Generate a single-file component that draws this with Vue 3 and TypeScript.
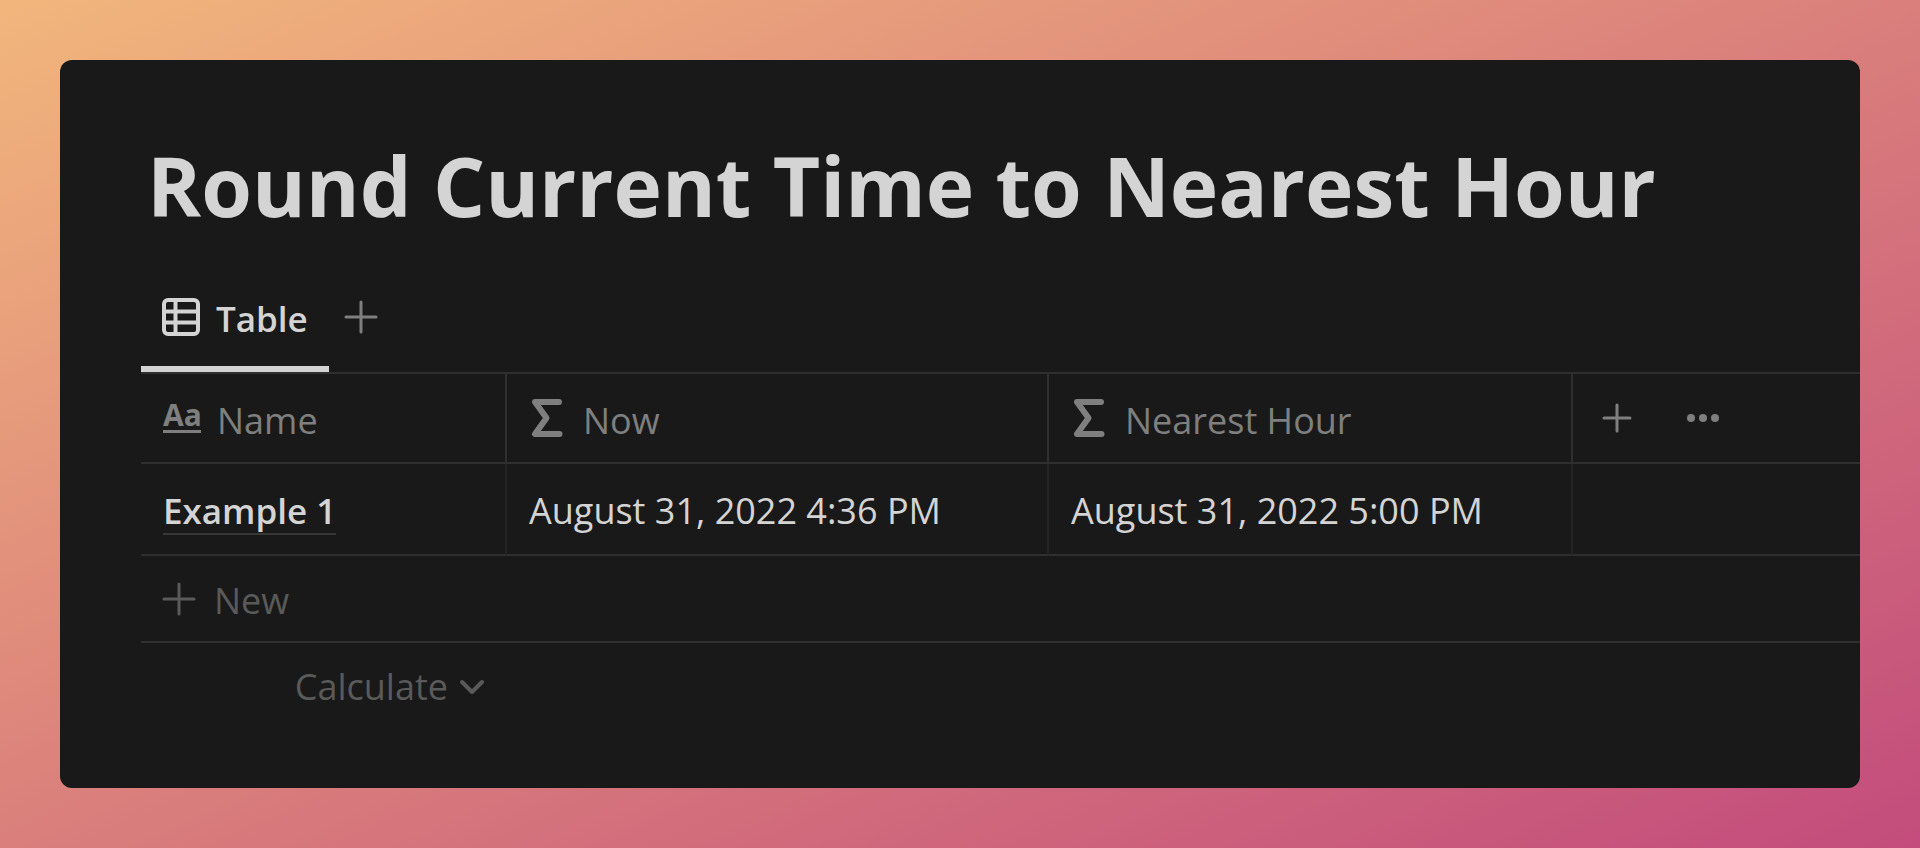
<script setup lang="ts">
interface Column {
  key: 'name' | 'now' | 'nearest'
  label: string
  kind: 'title' | 'formula'
}

interface Row {
  name: string
  now: string
  nearest: string
}

const columns: Column[] = [
  { key: 'name', label: 'Name', kind: 'title' },
  { key: 'now', label: 'Now', kind: 'formula' },
  { key: 'nearest', label: 'Nearest Hour', kind: 'formula' },
]

const rows: Row[] = [
  { name: 'Example 1', now: 'August 31, 2022 4:36 PM', nearest: 'August 31, 2022 5:00 PM' },
]
</script>

<template>
  <div class="page">
    <main class="card">
      <h1 class="title">Round Current Time to Nearest Hour</h1>

      <nav class="tabs" aria-label="Views">
        <button type="button" class="tab">
          <svg class="icon" width="38" height="38" viewBox="0 0 38 38" aria-hidden="true">
            <rect x="2" y="2" width="34" height="34" rx="4" />
            <path d="M13.500 2V36M2 13.500H36M2 24.500H36" />
          </svg>
          <span class="label">Table</span>
        </button>
        <button type="button" class="icon-button" aria-label="Add view">
          <svg class="icon thin" width="34" height="34" viewBox="0 0 34 34" aria-hidden="true">
            <path d="M17 2V32M2 17H32" />
          </svg>
        </button>
      </nav>

      <table class="grid">
        <colgroup>
          <col class="col-name" />
          <col class="col-now" />
          <col class="col-nearest" />
          <col />
        </colgroup>
        <thead>
          <tr>
            <th v-for="column in columns" :key="column.key" scope="col">
              <span class="heading">
                <span v-if="column.kind === 'title'" class="aa" aria-hidden="true">Aa</span>
                <svg v-else class="sigma" width="38" height="38" viewBox="0 0 38 38" aria-hidden="true">
                  <path d="M30 3H6L17.500 19L6 35H30.500" />
                </svg>
                <span class="label">{{ column.label }}</span>
              </span>
            </th>
            <td>
              <span class="actions">
                <button type="button" class="icon-button" aria-label="Add column">
                  <svg class="icon thin" width="30" height="30" viewBox="0 0 30 30" aria-hidden="true">
                    <path d="M15 2V28M2 15H28" />
                  </svg>
                </button>
                <button type="button" class="icon-button" aria-label="More options">
                  <svg class="dots" width="34" height="10" viewBox="0 0 34 10" aria-hidden="true">
                    <circle cx="5" cy="5" r="4" />
                    <circle cx="17" cy="5" r="4" />
                    <circle cx="29" cy="5" r="4" />
                  </svg>
                </button>
              </span>
            </td>
          </tr>
        </thead>
        <tbody>
          <tr v-for="row in rows" :key="row.name">
            <td><a href="#" class="row-link">{{ row.name }}</a></td>
            <td>{{ row.now }}</td>
            <td>{{ row.nearest }}</td>
            <td></td>
          </tr>
        </tbody>
      </table>

      <button type="button" class="new-row">
        <svg class="icon thin" width="34" height="34" viewBox="0 0 34 34" aria-hidden="true">
          <path d="M17 2V32M2 17H32" />
        </svg>
        <span class="label">New</span>
      </button>

      <div class="footer">
        <button type="button" class="calculate">
          Calculate
          <svg class="icon" width="24" height="16" viewBox="0 0 24 16" aria-hidden="true">
            <path d="M2 3L12 13L22 3" />
          </svg>
        </button>
      </div>
    </main>
  </div>
</template>

<style>
body {
  margin: 0;
}
</style>

<style scoped>
.page {
  box-sizing: border-box;
  min-height: 100vh;
  padding: 60px;
  display: flex;
  background: linear-gradient(to bottom right, #f2b67c, #da7f7c 50%, #c34c7c);
  font-family: "Open Sans", "Noto Sans", sans-serif;
  font-size: 36px;
  line-height: 48px;
  color: #d4d4d4;
}

.card {
  box-sizing: border-box;
  flex: 1;
  min-width: 0;
  padding: 65px 0 56px 81px;
  border-radius: 12px;
  background: #191919;
  overflow: hidden;
}

.title {
  margin: 0;
  padding-left: 6px;
  font-size: 82px;
  line-height: 120px;
  font-weight: 700;
  white-space: nowrap;
}

button {
  padding: 0;
  border: 0;
  background: none;
  color: inherit;
  font: inherit;
  cursor: pointer;
}

.icon {
  flex: none;
  fill: none;
  stroke: currentColor;
  stroke-width: 4;
  stroke-linecap: round;
  stroke-linejoin: round;
}

.thin {
  stroke-width: 3;
}

.label {
  padding-top: 5px;
}

.tabs {
  display: flex;
  height: 127px;
  border-bottom: 2px solid #2f2f2f;
}

.tab {
  display: flex;
  align-items: center;
  gap: 16px;
  padding: 22px 21px 0 21px;
  border-bottom: 6px solid #d4d4d4;
  font-size: 35px;
  font-weight: 600;
}

.icon-button {
  display: flex;
  align-items: center;
  justify-content: center;
  color: #7f7f7f;
}

.tabs .icon-button {
  padding: 22px 15px 6px;
}

.grid {
  width: 100%;
  table-layout: fixed;
  border-collapse: separate;
  border-spacing: 0;
}

.col-name {
  width: 366px;
}

.col-now {
  width: 542px;
}

.col-nearest {
  width: 524px;
}

.grid th,
.grid td {
  box-sizing: border-box;
  padding: 0 22px;
  border-bottom: 2px solid #2f2f2f;
  border-right: 2px solid #2f2f2f;
  text-align: left;
  font-weight: 400;
  white-space: nowrap;
}

.grid th,
.grid thead td {
  height: 90px;
  color: #7f7f7f;
}

.grid tbody td {
  height: 92px;
  padding-top: 3px;
  border-right-color: #232323;
}

.grid tr > :last-child {
  border-right: 0;
}

.heading {
  display: flex;
  align-items: center;
  gap: 16px;
}

.aa {
  flex: none;
  width: 38px;
  margin-bottom: 3px;
  border-bottom: 3px solid currentColor;
  font-size: 30px;
  line-height: 30px;
  font-weight: 700;
}

.sigma {
  flex: none;
  fill: none;
  stroke: currentColor;
  stroke-width: 6;
  stroke-linecap: round;
  stroke-linejoin: round;
}

.actions {
  display: flex;
  align-items: center;
  gap: 54px;
  padding-left: 7px;
}

.dots {
  fill: currentColor;
}

.row-link {
  display: inline-block;
  border-bottom: 2px solid #373737;
  color: inherit;
  font-size: 35px;
  line-height: 44px;
  font-weight: 600;
  text-decoration: none;
}

.new-row {
  display: flex;
  align-items: center;
  gap: 18px;
  width: 100%;
  height: 87px;
  padding-left: 21px;
  border-bottom: 2px solid #2f2f2f;
  color: #5a5a5a;
}

.footer {
  display: flex;
  justify-content: flex-end;
  width: 366px;
  padding-top: 20px;
}

.calculate {
  display: flex;
  align-items: center;
  gap: 12px;
  padding-right: 23px;
  color: #5a5a5a;
}
</style>
